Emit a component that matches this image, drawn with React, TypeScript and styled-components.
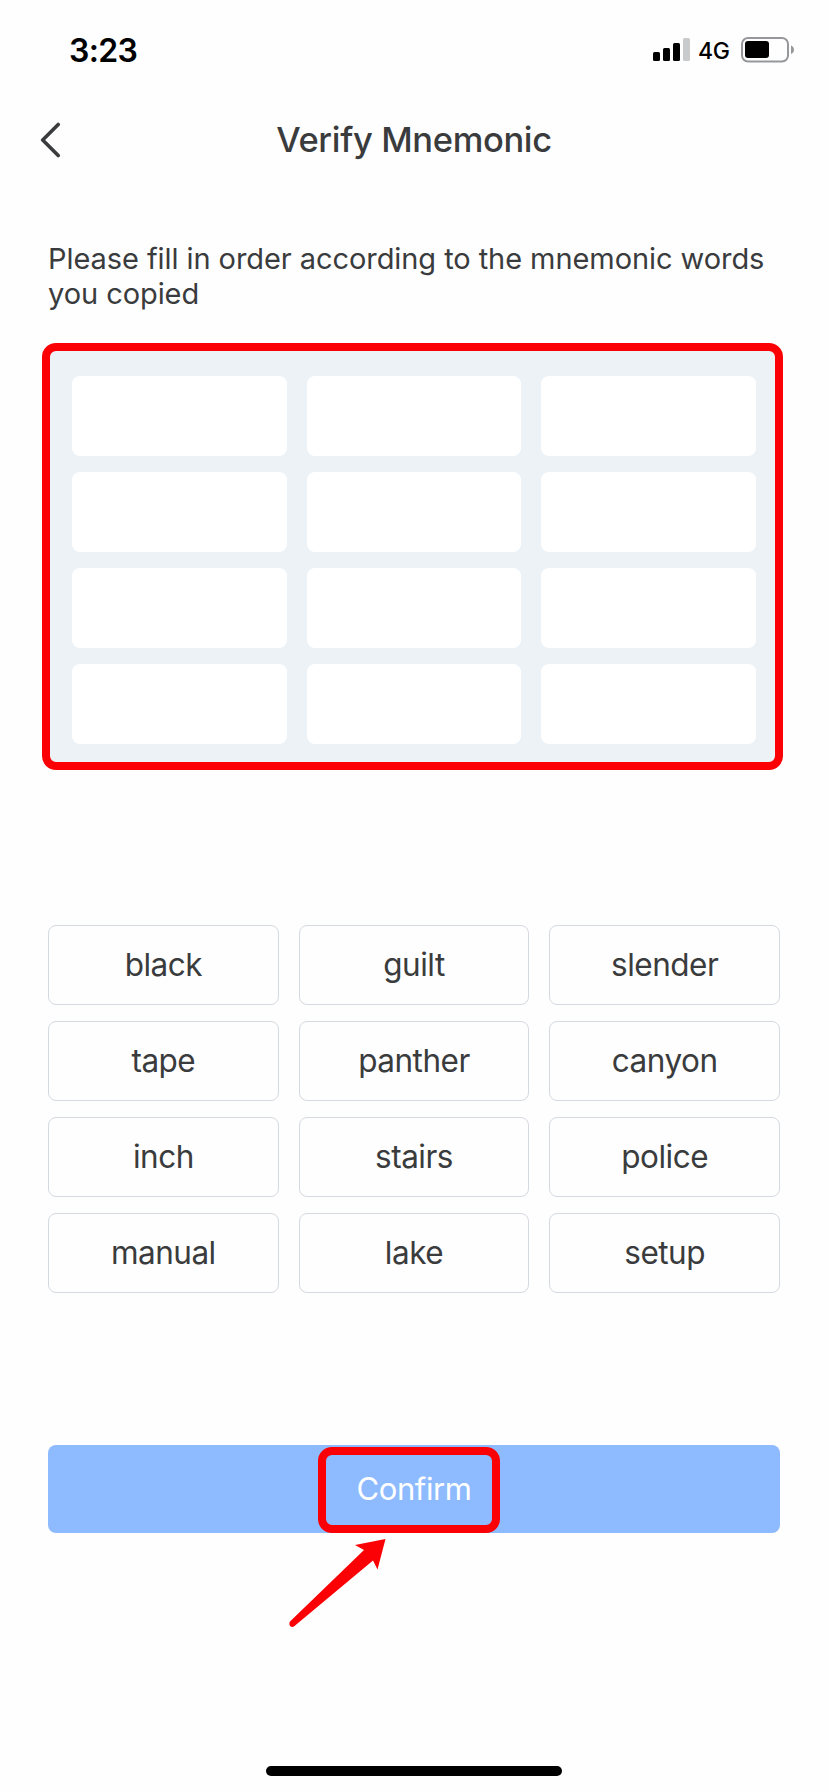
import React from "react";
import styled, { createGlobalStyle } from "styled-components";

const GlobalStyle = createGlobalStyle`
  *, *::before, *::after { box-sizing: border-box; }
  body { margin: 0; background: #fefefe; }
`;

const Screen = styled.main`
  display: flex;
  flex-direction: column;
  width: 828px;
  height: 1792px;
  overflow: hidden;
  background: #fefefe;
  color: #3a3b3d;
  font-family: Inter, "Liberation Sans", sans-serif;
`;

const StatusBar = styled.header`
  display: flex;
  justify-content: space-between;
  align-items: center;
  height: 100px;
  padding: 0 34px 0 69px;
  color: #000;
`;

const Time = styled.span`
  padding-top: 2px;
  font-size: 32px;
  font-weight: 600;
  line-height: 40px;
  letter-spacing: -0.7px;
`;

const StatusIcons = styled.div`
  display: flex;
  align-items: center;
`;

const Network = styled.span`
  width: 32px;
  margin: 1px 11px 0 7px;
  font-size: 23px;
  font-weight: 500;
  line-height: 28px;
  letter-spacing: -0.3px;
`;

const NavBar = styled.nav`
  display: grid;
  grid-template-columns: 100px 1fr 100px;
  align-items: center;
  height: 80px;
`;

const BackButton = styled.button`
  display: flex;
  margin: 0 0 0 40px;
  padding: 0;
  border: 0;
  background: none;
  color: inherit;
`;

const Title = styled.h1`
  margin: 0;
  font-size: 34.5px;
  font-weight: 500;
  line-height: 42px;
  letter-spacing: -0.35px;
  text-align: center;
`;

const Content = styled.section`
  display: flex;
  flex-direction: column;
  padding: 61px 48px 0;
`;

const Instruction = styled.p`
  margin: 0;
  font-size: 29px;
  line-height: 35px;
  letter-spacing: -0.07px;
  white-space: nowrap;
`;

const Grid = styled.div`
  display: grid;
  grid-template-columns: repeat(3, 1fr);
  grid-auto-rows: 80px;
  gap: 16px 20px;
`;

const AnswerPanel = styled.div`
  position: relative;
  height: 414px;
  margin-top: 39px;
  padding: 26px 24px 0;
  background: #edf2f7;
`;

const Slot = styled.div`
  border-radius: 8px;
  background: #fff;
`;

const WordBank = styled(Grid)`
  margin-top: 161px;
`;

const Word = styled.button`
  padding: 0;
  border: 1px solid #d5dae0;
  border-radius: 8px;
  background: #fefefe;
  color: inherit;
  font: 400 31.5px/40px Inter, "Liberation Sans", sans-serif;
  letter-spacing: -0.5px;
`;

const ConfirmButton = styled.button`
  position: relative;
  height: 88px;
  margin-top: 152px;
  padding: 0;
  border: 0;
  border-radius: 8px;
  background: #8ebbff;
  color: #fff;
  font: 400 31px/40px Inter, "Liberation Sans", sans-serif;
  letter-spacing: -0.4px;
`;

const Highlight = styled.span<{ $inset: string; $radius: number }>`
  position: absolute;
  inset: ${(p) => p.$inset};
  border: 8px solid #fb0004;
  border-radius: ${(p) => p.$radius}px;
`;

const Arrow = styled.svg`
  position: absolute;
  top: 92px;
  left: 238px;
`;

const HomeIndicator = styled.div`
  width: 296px;
  height: 10px;
  margin: auto auto 16px;
  border-radius: 5px;
  background: #000;
`;

const words = [
  "black", "guilt", "slender",
  "tape", "panther", "canyon",
  "inch", "stairs", "police",
  "manual", "lake", "setup",
];

const SignalIcon = () => (
  <svg width="38" height="24" viewBox="0 0 38 24">
    <rect x="0" y="14" width="7" height="9" rx="1.5" />
    <rect x="10" y="10" width="7" height="13" rx="1.5" />
    <rect x="20" y="5" width="7" height="18" rx="1.5" />
    <rect x="30" y="0" width="7" height="23" rx="1.5" fill="#c9cacc" />
  </svg>
);

const BatteryIcon = () => (
  <svg width="53" height="26" viewBox="0 0 53 26">
    <rect x="1" y="1" width="46" height="23.5" rx="6" fill="none" stroke="#96979a" strokeWidth="2" />
    <rect x="4" y="4" width="24" height="17" rx="3" />
    <path d="M50 8.5c4 1.200 4 7.300 0 8.500z" fill="#96979a" />
  </svg>
);

export default function App() {
  return (
    <>
      <GlobalStyle />
      <Screen>
        <StatusBar>
          <Time>3:23</Time>
          <StatusIcons>
            <SignalIcon />
            <Network>4G</Network>
            <BatteryIcon />
          </StatusIcons>
        </StatusBar>
        <NavBar>
          <BackButton aria-label="Back">
            <svg width="22" height="36" viewBox="0 0 22 36" fill="none" stroke="currentColor" strokeWidth="3.6" strokeLinecap="round" strokeLinejoin="round">
              <path d="M18.200 2.500 2.700 18l15.500 15.500" />
            </svg>
          </BackButton>
          <Title>Verify Mnemonic</Title>
        </NavBar>
        <Content>
          <Instruction>
            Please fill in order according to the mnemonic words
            <br />
            you copied
          </Instruction>
          <AnswerPanel>
            <Grid>
              {words.map((w) => (
                <Slot key={w} />
              ))}
            </Grid>
            <Highlight $inset="-7px -2.500px -6px -6px" $radius={14} />
          </AnswerPanel>
          <WordBank>
            {words.map((w) => (
              <Word key={w}>{w}</Word>
            ))}
          </WordBank>
          <ConfirmButton>
            Confirm
            <Highlight $inset="2px 280px 0 270px" $radius={14} />
            <Arrow width="102" height="94" viewBox="0 0 102 94">
              <path d="M99.500 2 69 8l9 5L4 84.500c-2 4 1.500 7 4.500 4.500L87 23.500l4.500 9z" fill="#fb0004" />
            </Arrow>
          </ConfirmButton>
        </Content>
        <HomeIndicator />
      </Screen>
    </>
  );
}
